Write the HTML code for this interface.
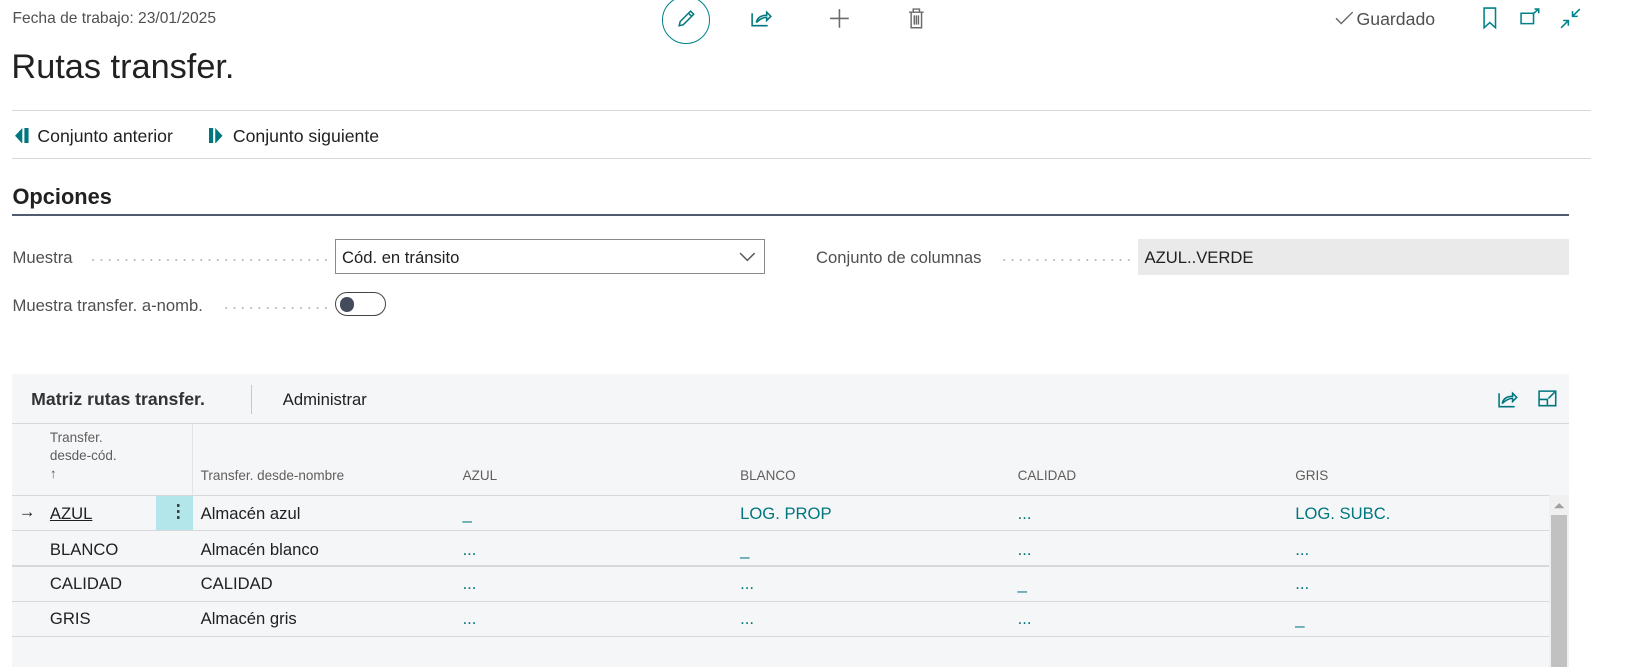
<!DOCTYPE html>
<html><head><meta charset="utf-8"><style>
*{box-sizing:border-box;margin:0;padding:0}
body{width:1630px;height:642px;overflow:hidden;background:#fff;font-family:"Liberation Sans",sans-serif;color:#212121;position:relative}
#w{position:absolute;left:0;top:0;width:1568px;height:618px;zoom:1.0395}
.a{position:absolute;white-space:nowrap}
.teal{color:#00767e}
.dots{position:absolute;height:2px;background-image:radial-gradient(circle,#bdbdbd 0.9px,transparent 1.1px);background-size:8px 2px}
.hl{position:absolute;height:1px;background:#d8d8d8}
</style></head><body><div id="w">
<div class="a" style="left:12px;top:10px;font-size:15px;color:#505050">Fecha de trabajo: 23/01/2025</div>
<div class="a" style="left:637px;top:-4px;width:46px;height:46px;border:1.5px solid #00838a;border-radius:50%"></div>
<svg class="a" style="left:649px;top:7px" width="22" height="22" viewBox="0 0 22 22" fill="none" stroke="#00767e" stroke-width="1.4"><path d="M4 18l1-4L15 4l3 3L8 17z M13 6l3 3"/></svg>
<svg class="a" style="left:721px;top:7px" width="24" height="22" viewBox="0 0 24 22" fill="none" stroke="#00767e" stroke-width="1.5"><path d="M3 6v12h15 M7 15c1-5 5-7 10-7V5l4 4-4 4v-3c-4 0-7 2-10 5"/></svg>
<svg class="a" style="left:797px;top:7px" width="22" height="22" stroke="#6b6b6b" stroke-width="1.5"><path d="M11 2v18M2 11h18"/></svg>
<svg class="a" style="left:873px;top:7px" width="18" height="22" fill="none" stroke="#6b6b6b" stroke-width="1.4"><path d="M2 5h14M6 5V2h6v3M4 5v15h10V5M7 8v9M9 8v9M11 8v9"/></svg>
<svg class="a" style="left:1284px;top:10px" width="18" height="16" fill="none" stroke="#6b6b6b" stroke-width="1.4"><path d="M1 8l5 5L17 2"/></svg>
<div class="a" style="left:1305px;top:9px;font-size:17px;color:#505050">Guardado</div>
<svg class="a" style="left:1426px;top:7px" width="16" height="22" fill="none" stroke="#00838a" stroke-width="1.5"><path d="M2 1h11v19l-5.5-5L2 20z"/></svg>
<svg class="a" style="left:1461px;top:7px" width="22" height="18" fill="none" stroke="#00838a" stroke-width="1.5"><path d="M2 6h12v10H2z M13 7l6-5 M15 2h4v4"/></svg>
<svg class="a" style="left:1500px;top:7px" width="22" height="22" fill="none" stroke="#00838a" stroke-width="1.5"><path d="M2 20l7-7 M4 13h5v5 M20 2l-7 7 M13 4v5h5"/></svg>
<div class="a" style="left:11px;top:46px;font-size:33px;color:#212121">Rutas transfer.</div>
<div class="hl" style="left:12px;top:106px;width:1519px"></div>
<svg class="a" style="left:13px;top:123px" width="18" height="15" fill="#00767e"><path d="M8 0L1 7.5 8 15z M10 0h4v15h-4z"/></svg>
<div class="a" style="left:36px;top:121px;font-size:17px">Conjunto anterior</div>
<svg class="a" style="left:201px;top:123px" width="18" height="15" fill="#00767e"><path d="M0 0h4v15H0z M6 0l7 7.5L6 15z"/></svg>
<div class="a" style="left:224px;top:121px;font-size:17px">Conjunto siguiente</div>
<div class="hl" style="left:12px;top:152px;width:1519px"></div>
<div class="a" style="left:12px;top:177px;font-size:21px;font-weight:bold;color:#212121">Opciones</div>
<div class="a" style="left:12px;top:206px;width:1497px;height:2px;background:#505c6d"></div>
<div class="a" style="left:12px;top:239px;font-size:16px;color:#505050">Muestra</div>
<div class="dots" style="left:86px;top:249px;width:230px"></div>
<div class="a" style="left:322px;top:230px;width:414px;height:34px;border:1px solid #8a8a8a;padding:8px 6px;font-size:16px">Cód. en tránsito</div>
<svg class="a" style="left:710px;top:241px" width="18" height="12" fill="none" stroke="#555" stroke-width="1.4"><path d="M2 2l7 7 7-7"/></svg>
<div class="a" style="left:12px;top:285px;font-size:16px;color:#505050">Muestra transfer. a-nomb.</div>
<div class="dots" style="left:214px;top:295px;width:102px"></div>
<div class="a" style="left:322px;top:281px;width:49px;height:23px;border:1.5px solid #444;border-radius:12px"></div>
<div class="a" style="left:327px;top:286px;width:14px;height:14px;background:#444c5c;border-radius:50%"></div>
<div class="a" style="left:785px;top:239px;font-size:16px;color:#505050">Conjunto de columnas</div>
<div class="dots" style="left:962px;top:249px;width:126px"></div>
<div class="a" style="left:1095px;top:230px;width:414px;height:35px;background:#eaeaea;padding:9px 6px;font-size:16px">AZUL..VERDE</div>

<div class="a" style="left:12px;top:360px;width:1497px;height:282px;background:#f5f6f8"></div>
<div class="a" style="left:30px;top:374px;font-size:17px;font-weight:bold;color:#333">Matriz rutas transfer.</div>
<div class="a" style="left:241px;top:370px;width:1px;height:28px;background:#c8c8c8"></div>
<div class="a" style="left:272px;top:375px;font-size:16px">Administrar</div>
<svg class="a" style="left:1440px;top:373px" width="22" height="20" fill="none" stroke="#00767e" stroke-width="1.5"><path d="M2 5v13h15 M5 15c1-5 5-7 10-7V5l4 4-4 4v-3c-4 0-7 2-10 5"/></svg>
<svg class="a" style="left:1479px;top:373px" width="22" height="20" fill="none" stroke="#00767e" stroke-width="1.5"><path d="M2 3h16v14H2z M2 11h8v6 M11 10l6-6 M14 3h4v4"/></svg>
<div class="hl" style="left:12px;top:407px;width:1497px"></div>
<div class="a" style="left:185px;top:408px;width:1px;height:68px;background:#e4e4e4"></div>
<div class="a" style="left:48px;top:413px;font-size:13px;color:#605e5c;line-height:17px">Transfer.<br>desde-cód.<br>↑</div>
<div class="a" style="left:193px;top:450px;font-size:13px;color:#605e5c">Transfer. desde-nombre</div>
<div class="a" style="left:445px;top:450px;font-size:13px;color:#605e5c">AZUL</div>
<div class="a" style="left:712px;top:450px;font-size:13px;color:#605e5c">BLANCO</div>
<div class="a" style="left:979px;top:450px;font-size:13px;color:#605e5c">CALIDAD</div>
<div class="a" style="left:1246px;top:450px;font-size:13px;color:#605e5c">GRIS</div>
<div class="hl" style="left:12px;top:476px;width:1478px"></div>
<div class="hl" style="left:12px;top:510px;width:1478px"></div>
<div class="hl" style="left:12px;top:544px;width:1478px"></div>
<div class="hl" style="left:12px;top:578px;width:1478px"></div>
<div class="hl" style="left:12px;top:612px;width:1478px"></div>
<div class="a" style="left:1490px;top:476px;width:19px;height:166px;background:#f0f0f0"></div>
<div class="a" style="left:1492px;top:495px;width:15px;height:147px;background:#c1c1c1"></div>
<svg class="a" style="left:1494px;top:482px" width="12" height="8"><path d="M1 7l5-5 5 5z" fill="#a0a0a0"/></svg>
<div class="a" style="left:150px;top:477px;width:36px;height:33px;background:#b2e6ea"></div>
<div class="a" style="left:163px;top:482px;font-size:17px;font-weight:bold;color:#333">⋮</div>
<div class="a" style="left:18px;top:483px;font-size:16px">→</div>
<div style="font-size:16px">
<div class="a" style="left:48px;top:485px;text-decoration:underline">AZUL</div>
<div class="a" style="left:193px;top:485px">Almacén azul</div>
<div class="a teal" style="left:445px;top:485px">_</div>
<div class="a teal" style="left:712px;top:485px">LOG. PROP</div>
<div class="a teal" style="left:979px;top:485px">...</div>
<div class="a teal" style="left:1246px;top:485px">LOG. SUBC.</div>
<div class="a" style="left:48px;top:519px">BLANCO</div>
<div class="a" style="left:193px;top:519px">Almacén blanco</div>
<div class="a teal" style="left:445px;top:519px">...</div>
<div class="a teal" style="left:712px;top:519px">_</div>
<div class="a teal" style="left:979px;top:519px">...</div>
<div class="a teal" style="left:1246px;top:519px">...</div>
<div class="a" style="left:48px;top:552px">CALIDAD</div>
<div class="a" style="left:193px;top:552px">CALIDAD</div>
<div class="a teal" style="left:445px;top:552px">...</div>
<div class="a teal" style="left:712px;top:552px">...</div>
<div class="a teal" style="left:979px;top:552px">_</div>
<div class="a teal" style="left:1246px;top:552px">...</div>
<div class="a" style="left:48px;top:586px">GRIS</div>
<div class="a" style="left:193px;top:586px">Almacén gris</div>
<div class="a teal" style="left:445px;top:586px">...</div>
<div class="a teal" style="left:712px;top:586px">...</div>
<div class="a teal" style="left:979px;top:586px">...</div>
<div class="a teal" style="left:1246px;top:586px">_</div>
</div>
</div></body></html>
